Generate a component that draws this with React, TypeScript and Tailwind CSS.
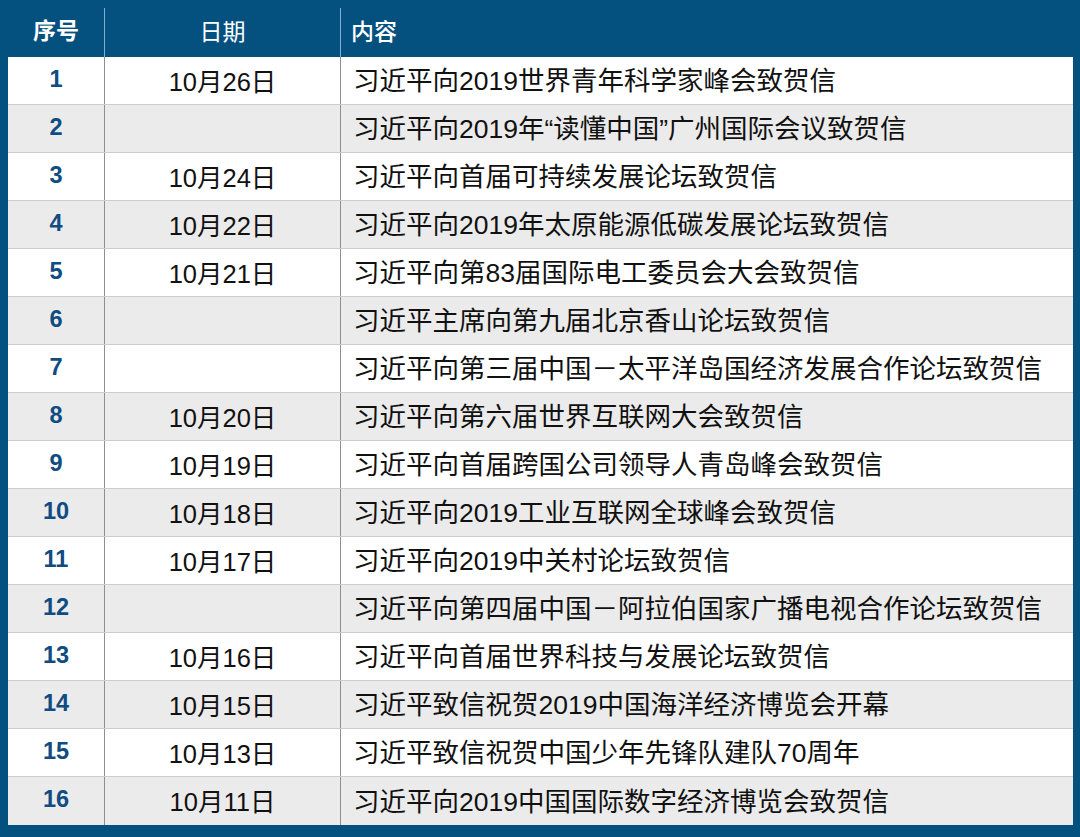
const rows: [string, string, string][] = [
  ["1", "10月26日", "习近平向2019世界青年科学家峰会致贺信"],
  ["2", "", "习近平向2019年“读懂中国”广州国际会议致贺信"],
  ["3", "10月24日", "习近平向首届可持续发展论坛致贺信"],
  ["4", "10月22日", "习近平向2019年太原能源低碳发展论坛致贺信"],
  ["5", "10月21日", "习近平向第83届国际电工委员会大会致贺信"],
  ["6", "", "习近平主席向第九届北京香山论坛致贺信"],
  ["7", "", "习近平向第三届中国－太平洋岛国经济发展合作论坛致贺信"],
  ["8", "10月20日", "习近平向第六届世界互联网大会致贺信"],
  ["9", "10月19日", "习近平向首届跨国公司领导人青岛峰会致贺信"],
  ["10", "10月18日", "习近平向2019工业互联网全球峰会致贺信"],
  ["11", "10月17日", "习近平向2019中关村论坛致贺信"],
  ["12", "", "习近平向第四届中国－阿拉伯国家广播电视合作论坛致贺信"],
  ["13", "10月16日", "习近平向首届世界科技与发展论坛致贺信"],
  ["14", "10月15日", "习近平致信祝贺2019中国海洋经济博览会开幕"],
  ["15", "10月13日", "习近平致信祝贺中国少年先锋队建队70周年"],
  ["16", "10月11日", "习近平向2019中国国际数字经济博览会致贺信"],
];

const App = () => {
  return (
    <div
      className="w-[1080px] h-[837px] bg-[#04507f] pl-2 pr-[7px] pb-[11px] flex flex-col"
      style={{ fontFamily: '"Liberation Sans", "Noto Sans CJK SC", sans-serif' }}
    >
      {/* Header */}
      <div className="flex h-[57px] text-white text-[23px]">
        <div className="w-[96px] flex items-center justify-center pt-[6px] font-bold">序号</div>
        <div className="w-[236px] mt-2 border-l border-[#7fb0d8] flex items-center justify-center">日期</div>
        <div className="flex-1 mt-2 border-l border-[#7fb0d8] flex items-center pl-[10px] font-medium">内容</div>
      </div>

      {/* Body */}
      <div className="flex-1 flex flex-col">
        {rows.map(([no, date, text], i) => (
          <div
            key={no}
            className={`flex h-[48px] ${i % 2 === 1 ? "bg-[#ebebeb]" : "bg-white"} ${
              i < rows.length - 1 ? "border-b border-[#cdcdcd]" : ""
            }`}
          >
            <div className="w-[96px] flex items-center justify-center text-[23.5px] font-bold text-[#0f4c82] pb-[2px]">
              {no}
            </div>
            <div className="w-[236px] border-l border-[#8e8e8e] flex items-center justify-center text-[25.5px] text-[#111] pt-[3px]">
              {date}
            </div>
            <div className="flex-1 border-l border-[#8e8e8e] flex items-center pl-[12px] text-[26.5px] text-[#111] pt-[3px] whitespace-nowrap">
              {text}
            </div>
          </div>
        ))}
      </div>
    </div>
  );
};

export default App;
